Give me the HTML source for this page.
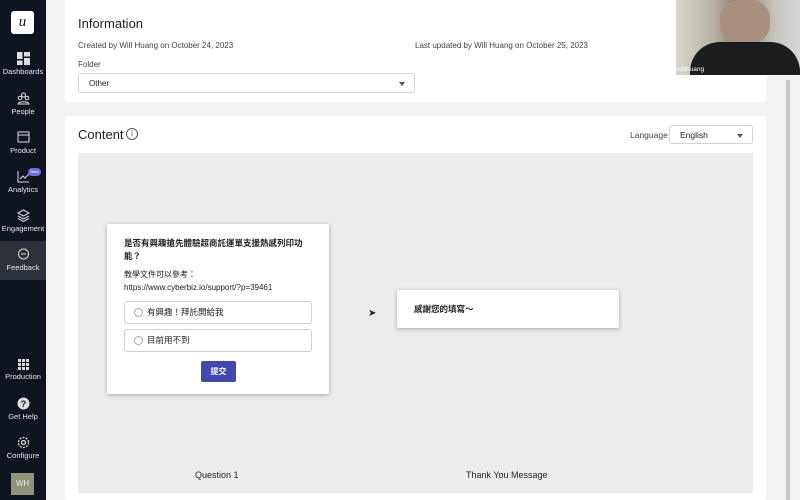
<!DOCTYPE html>
<html><head><meta charset="utf-8"><style>
*{box-sizing:border-box;margin:0;padding:0}
body{width:800px;height:500px;overflow:hidden;background:#f3f3f3;font-family:"Liberation Sans","Noto Sans CJK TC",sans-serif;position:relative;color:#222}
.sb{position:absolute;left:0;top:0;width:46px;height:500px;background:#0f1520;color:#e6e6e6;font-size:7.5px;text-align:center}
.it{position:absolute;left:0;width:46px}
.it svg{display:block;margin:0 auto 2px}
.logo{position:absolute;left:11px;top:11px;width:23px;height:23px;background:#fff;border-radius:3px;color:#111;font:italic 15px "Liberation Serif",serif;line-height:22px}
.card{position:absolute;background:#fff;border-radius:3px}
.t{position:absolute;white-space:nowrap}
.sel{position:absolute;border:1px solid #d4d4d4;border-radius:3px;background:#fff;font-size:8px;padding-left:10px}
.sel:after{content:"";position:absolute;right:9px;top:8px;border:3px solid transparent;border-top:4px solid #555}
.opt{position:absolute;left:17px;width:188px;height:23px;border:1px solid #d0d0d0;border-radius:3px;font-size:8.5px;line-height:21px;padding-left:22px}
.opt i{position:absolute;left:9px;top:6px;width:9px;height:9px;border:1px solid #aaa;border-radius:50%}
</style></head><body>
<div class="sb">
<div class="logo">u</div>
<div class="it" style="top:52px"><svg width="13" height="13"><rect x="0" y="0" width="5.5" height="7" fill="#ddd"/><rect x="7" y="0" width="6" height="4.5" fill="#ddd"/><rect x="0" y="8.5" width="5.5" height="4.5" fill="#ddd"/><rect x="7" y="6" width="6" height="7" fill="#ddd"/></svg>Dashboards</div>
<div class="it" style="top:92px"><svg width="13" height="13" fill="none" stroke="#ddd"><circle cx="6.5" cy="3" r="2"/><circle cx="3" cy="6" r="1.8"/><circle cx="10" cy="6" r="1.8"/><path d="M1 12c1-3 10-3 11 0z"/></svg>People</div>
<div class="it" style="top:131px"><svg width="13" height="13" fill="none" stroke="#ddd"><rect x="1" y="1" width="11" height="10"/><path d="M1 4h11"/></svg>Product</div>
<div class="it" style="top:170px"><svg width="13" height="13" fill="none" stroke="#ddd"><path d="M1 1v11h11M3 9l3-3 2 2 4-4"/></svg>Analytics</div>
<div style="position:absolute;left:28px;top:168px;width:13px;height:8px;background:#6c6ee0;border-radius:4px;font-size:4px;line-height:8px;color:#fff">Beta</div>
<div class="it" style="top:209px"><svg width="13" height="13" fill="none" stroke="#ddd"><path d="M6.5 1l5.5 3-5.5 3-5.5-3zM1 7l5.5 3 5.5-3M1 9.5l5.5 3 5.5-3"/></svg>Engagement</div>
<div class="it" style="top:241px;height:39px;background:#2c313a;padding-top:7px"><svg width="13" height="13" fill="none" stroke="#ddd"><circle cx="6.5" cy="6" r="5"/><path d="M4 6h5"/></svg>Feedback</div>
<div class="it" style="top:359px"><svg width="11" height="11" fill="#ddd"><rect x="0" y="0" width="3" height="3"/><rect x="4" y="0" width="3" height="3"/><rect x="8" y="0" width="3" height="3"/><rect x="0" y="4" width="3" height="3"/><rect x="4" y="4" width="3" height="3"/><rect x="8" y="4" width="3" height="3"/><rect x="0" y="8" width="3" height="3"/><rect x="4" y="8" width="3" height="3"/><rect x="8" y="8" width="3" height="3"/></svg>Production</div>
<div class="it" style="top:397px"><svg width="13" height="13"><circle cx="6.5" cy="6.5" r="6" fill="#ddd"/><text x="6.5" y="10" font-size="9" font-weight="bold" text-anchor="middle" fill="#0f1520" font-family="Liberation Sans">?</text></svg>Get Help</div>
<div class="it" style="top:436px"><svg width="13" height="13" fill="none" stroke="#ddd" stroke-width="1.3"><circle cx="6.5" cy="6.5" r="2"/><circle cx="6.5" cy="6.5" r="5" stroke-dasharray="2 1.2"/></svg>Configure</div>
<div style="position:absolute;left:11px;top:473px;width:23px;height:22px;background:#8f9178;color:#eee;font-size:8px;line-height:22px">WH</div>
</div>

<div class="card" style="left:65px;top:0;width:701px;height:102px"></div>
<div class="t" style="left:78px;top:16px;font-size:13px">Information</div>
<div class="t" style="left:78px;top:41px;font-size:8px;color:#444">Created by Will Huang on October 24, 2023</div>
<div class="t" style="left:415px;top:41px;font-size:8px;color:#444">Last updated by Will Huang on October 25, 2023</div>
<div class="t" style="left:78px;top:60px;font-size:8px;color:#444">Folder</div>
<div class="sel" style="left:78px;top:73px;width:337px;height:20px;line-height:19px">Other</div>

<div class="card" style="left:65px;top:116px;width:701px;height:384px"></div>
<div class="t" style="left:78px;top:127px;font-size:13px">Content</div>
<div style="position:absolute;left:126px;top:128px;width:12px;height:12px;border:1px solid #555;border-radius:50%;font-size:8px;text-align:center;line-height:10px;color:#555">i</div>
<div class="t" style="left:630px;top:130px;font-size:8.5px;color:#444">Language</div>
<div class="sel" style="left:669px;top:125px;width:84px;height:19px;line-height:18px;font-size:8.5px">English</div>
<div style="position:absolute;left:78px;top:153px;width:675px;height:340px;background:#ececec"></div>

<div class="card" style="left:107px;top:224px;width:222px;height:170px;box-shadow:0 1px 4px rgba(0,0,0,.3);border-radius:1px">
<div class="t" style="left:17px;top:13px;font-size:8.5px;font-weight:bold;white-space:normal;width:182px;line-height:13px">是否有興趣搶先體驗超商託運單支援熱感列印功能？</div>
<div class="t" style="left:17px;top:44px;font-size:8px;line-height:13px">教學文件可以參考：<br>https://www.cyberbiz.io/support/?p=39461</div>
<div class="opt" style="top:77px"><i></i>有興趣！拜託開給我</div>
<div class="opt" style="top:105px"><i></i>目前用不到</div>
<div style="position:absolute;left:94px;top:137px;width:35px;height:21px;background:#4348ae;border-radius:2px;color:#fff;font-size:8px;font-weight:bold;text-align:center;line-height:21px">提交</div>
</div>
<div class="card" style="left:397px;top:290px;width:222px;height:38px;box-shadow:0 1px 4px rgba(0,0,0,.3);border-radius:1px">
<div class="t" style="left:17px;top:13px;font-size:8.5px;font-weight:bold">感謝您的填寫～</div>
</div>
<div class="t" style="left:368px;top:308px;font-size:10px">➤</div>
<div class="t" style="left:195px;top:470px;font-size:9px">Question 1</div>
<div class="t" style="left:466px;top:470px;font-size:9px">Thank You Message</div>

<div style="position:absolute;left:786px;top:80px;width:4px;height:420px;background:#c8c8c8"></div>
<div style="position:absolute;left:676px;top:0;width:124px;height:75px;background:linear-gradient(90deg,#d8d6cc,#b9b3a8 30%,#8a7a6c 50%,#c7c5c0 80%,#d6d6d6)"></div>
<div style="position:absolute;left:720px;top:0;width:50px;height:45px;background:#a98f7e;border-radius:40% 40% 45% 45%"></div>
<div style="position:absolute;left:690px;top:42px;width:110px;height:33px;background:#1b1c1e;border-radius:30px 30px 0 0"></div>
<div class="t" style="left:677px;top:66px;font-size:6.5px;color:#fff">willhuang</div>
</body></html>
